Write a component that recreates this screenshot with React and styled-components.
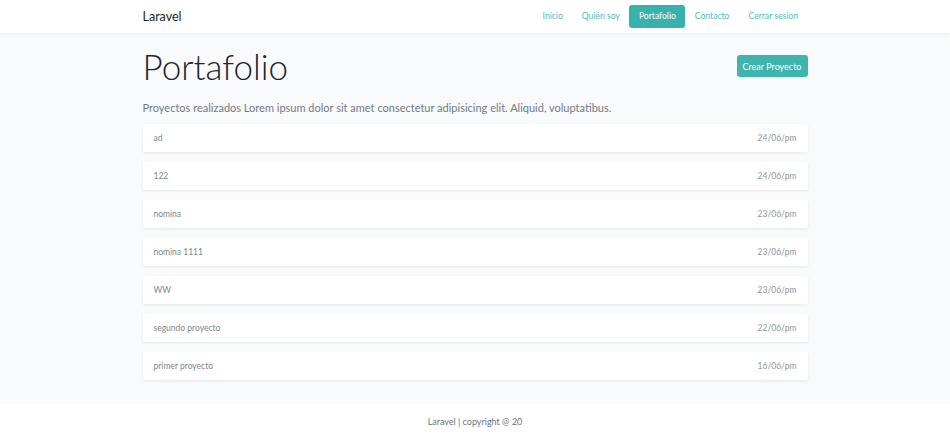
import React from 'react';
import styled, { createGlobalStyle } from 'styled-components';

const projects = [
  { title: 'ad', date: '24/06/pm' },
  { title: '122', date: '24/06/pm' },
  { title: 'nomina', date: '23/06/pm' },
  { title: 'nomina 1111', date: '23/06/pm' },
  { title: 'WW', date: '23/06/pm' },
  { title: 'segundo proyecto', date: '22/06/pm' },
  { title: 'primer proyecto', date: '16/06/pm' },
];

const links = ['Inicio', 'Quién soy', 'Portafolio', 'Contacto', 'Cerrar sesion'];

const GlobalStyle = createGlobalStyle`
  body {
    margin: 0;
    font-family: 'Lato', 'Noto Sans', sans-serif;
    background: #ffffff;
    color: #212529;
  }
`;

function App() {
  return (
    <Page>
      <GlobalStyle />
      <NavBar>
        <NavInner>
          <Brand>Laravel</Brand>
          <NavList>
            {links.map((link) => (
              <NavLink key={link} active={link === 'Portafolio'}>
                {link}
              </NavLink>
            ))}
          </NavList>
        </NavInner>
      </NavBar>
      <Main>
        <Container>
          <Header>
            <Title>Portafolio</Title>
            <CreateButton>Crear Proyecto</CreateButton>
          </Header>
          <Lead>
            Proyectos realizados Lorem ipsum dolor sit amet consectetur
            adipisicing elit. Aliquid, voluptatibus.
          </Lead>
          <List>
            {projects.map((p) => (
              <Item key={p.title}>
                <span>{p.title}</span>
                <DateText>{p.date}</DateText>
              </Item>
            ))}
          </List>
        </Container>
      </Main>
      <Footer>Laravel | copyright @ 20</Footer>
    </Page>
  );
}

export default App;

const Page = styled.div`
  display: flex;
  flex-direction: column;
  min-height: 436px;
`;

const NavBar = styled.nav`
  position: relative;
  z-index: 1;
  background: #ffffff;
  height: 33px;
  box-shadow: 0 1px 3px rgba(0, 0, 0, 0.06);
`;

const NavInner = styled.div`
  width: 665px;
  height: 100%;
  margin: 0 auto;
  display: flex;
  align-items: center;
  justify-content: space-between;
`;

const Brand = styled.span`
  font-size: 12.5px;
  color: #212529;
`;

const NavList = styled.div`
  display: flex;
  align-items: center;
  margin-right: 0;
`;

const NavLink = styled.span`
  font-size: 8.6px;
  padding: 0 9.5px;
  height: 23px;
  line-height: 23px;
  border-radius: 3px;
  color: ${(p) => (p.active ? '#ffffff' : '#4dbdb4')};
  background: ${(p) => (p.active ? '#38b2ac' : 'transparent')};
`;

const Main = styled.main`
  background: #f8fafc;
  padding-bottom: 24px;
`;

const Container = styled.div`
  width: 665px;
  margin: 0 auto;
`;

const Header = styled.div`
  display: flex;
  align-items: center;
  justify-content: space-between;
  padding-top: 11px;
`;

const Title = styled.h1`
  margin: 0;
  font-size: 35px;
  font-weight: 300;
  line-height: 44px;
  color: #212529;
`;

const CreateButton = styled.button`
  font-family: inherit;
  font-size: 9px;
  color: #ffffff;
  background: #3db4ad;
  border: none;
  border-radius: 3px;
  width: 71px;
  height: 22px;
  padding: 0;
`;

const Lead = styled.p`
  margin: 12px 0 9px;
  font-size: 11px;
  line-height: 15px;
  color: #737b83;
`;

const List = styled.div`
  display: flex;
  flex-direction: column;
  gap: 10px;
`;

const Item = styled.div`
  display: flex;
  justify-content: space-between;
  align-items: center;
  height: 28px;
  padding: 0 11px 0 11px;
  background: #ffffff;
  border-radius: 2px;
  box-shadow: 0 1px 3px rgba(0, 0, 0, 0.08);
  font-size: 8.5px;
  color: #80878e;
`;

const DateText = styled.span`
  color: #8f959b;
`;

const Footer = styled.footer`
  height: 34px;
  display: flex;
  align-items: center;
  justify-content: center;
  font-size: 9px;
  color: #6c757d;
  background: #ffffff;
`;
